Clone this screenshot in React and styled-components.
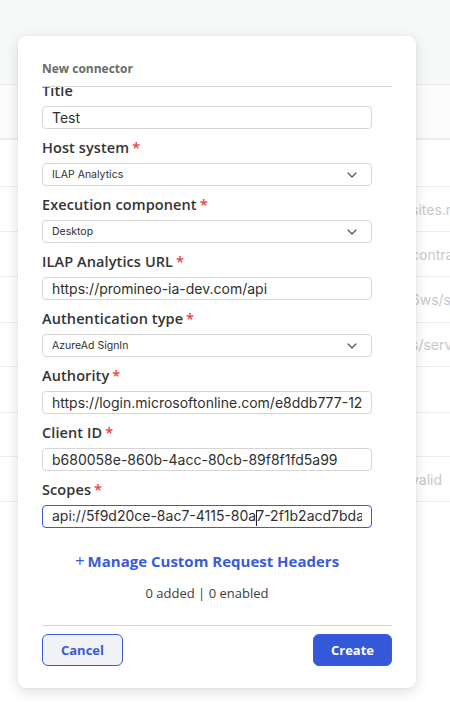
import React from "react";
import styled, { createGlobalStyle } from "styled-components";

const Global = createGlobalStyle`
  html, body { margin: 0; padding: 0; }
  body {
    width: 450px; height: 717px; overflow: hidden;
    background: #ffffff;
    font-family: Inter, "Noto Sans", sans-serif;
  }
`;

const Page = styled.div`
  position: relative;
  width: 450px;
  height: 717px;
  overflow: hidden;
  background: #fff;
`;

const TopBar = styled.div`
  height: 85px;
  background: #f7f8f8;
  border-bottom: 1px solid #eceeee;
  box-sizing: border-box;
`;

const HeadRow = styled.div`
  height: 55px;
  background: #fbfbfb;
  border-bottom: 2px solid #eeeeee;
  box-sizing: border-box;
`;

const Row = styled.div`
  height: ${(p) => p.$h || 45}px;
  border-bottom: 1px solid #eeeeee;
  box-sizing: border-box;
  display: flex;
  align-items: center;
  padding-left: 411px;
  font-size: 14px;
  color: #c8c8c8;
  white-space: nowrap;
  overflow: hidden;
`;

const Overlay = styled.div`
  position: absolute;
  inset: 0;
  display: flex;
  align-items: flex-start;
  padding: 36px 0 0 18px;
`;

const Modal = styled.div`
  width: 398px;
  box-sizing: border-box;
  background: #fff;
  border-radius: 8px;
  box-shadow: 0 4px 14px rgba(0, 0, 0, 0.13), 0 0 2px rgba(0, 0, 0, 0.08);
  padding: 24px 24px 22px;
  display: flex;
  flex-direction: column;
`;

const Title = styled.div`
  font-family: "Open Sans", sans-serif;
  font-weight: 700;
  font-size: 12px;
  line-height: 18px;
  color: #6b6b6b;
  padding-bottom: 8px;
  border-bottom: 1px solid #d4d4d4;
`;

const Scroll = styled.div`
  overflow: hidden;
`;

const Form = styled.div`
  margin-top: -6px;
  width: 330px;
  display: flex;
  flex-direction: column;
`;

const Field = styled.div`
  display: flex;
  flex-direction: column;
  margin-bottom: 9px;
`;

const Label = styled.label`
  font-family: "Open Sans", sans-serif;
  font-weight: 600;
  font-size: 14.5px;
  line-height: 20px;
  color: #343434;
  margin-bottom: 5px;
  letter-spacing: 0.1px;
`;

const Req = styled.span`
  color: #ef3b3b;
  margin-left: 3px;
`;

const Box = styled.div`
  height: 23px;
  box-sizing: border-box;
  border: 1px solid ${(p) => (p.$focus ? "#3a5bd9" : "#d6d6d6")};
  border-radius: 4px;
  display: flex;
  align-items: center;
  padding: 0 9px 0 9px;
  overflow: hidden;
  white-space: nowrap;
  font-size: ${(p) => (p.$small ? "10.5px" : "14px")};
  color: #2f2f2f;
  background: #fff;
`;

const Text = styled.span`
  flex: 1;
  overflow: hidden;
  white-space: nowrap;
`;

const Caret = styled.span`
  display: inline-block;
  width: 1px;
  height: 16px;
  background: #222;
  vertical-align: middle;
  margin: 0 -1px 0 0;
`;

const Chevron = () => (
  <svg width="10" height="6" viewBox="0 0 10 6" style={{ marginRight: 5 }}>
    <path d="M1 1l4 4 4-4" fill="none" stroke="#555" strokeWidth="1.2" strokeLinecap="round" strokeLinejoin="round" />
  </svg>
);

const Manage = styled.div`
  margin-top: 14px;
  text-align: center;
  font-family: "Open Sans", sans-serif;
  font-weight: 700;
  font-size: 15px;
  line-height: 20px;
  color: #3a5bd9;
`;

const Plus = styled.span`
  font-weight: 400;
  font-size: 17px;
  margin-right: 3px;
`;

const Count = styled.div`
  margin-top: 14px;
  text-align: center;
  font-family: "Open Sans", sans-serif;
  font-size: 13px;
  line-height: 16px;
  color: #3d3d3d;
`;

const Footer = styled.div`
  margin-top: 24px;
  border-top: 1px solid #d4d4d4;
  padding-top: 8px;
  display: flex;
  justify-content: space-between;
  align-items: center;
`;

const Btn = styled.button`
  height: 32px;
  box-sizing: border-box;
  border-radius: 6px;
  font-family: "Open Sans", sans-serif;
  font-weight: 700;
  font-size: 13px;
  cursor: pointer;
  border: 1px solid #3a5bd9;
  padding: 0;
  width: ${(p) => (p.$primary ? "79px" : "81px")};
  background: ${(p) => (p.$primary ? "#3358d8" : "#f0f2f6")};
  color: ${(p) => (p.$primary ? "#fff" : "#3a5bd9")};
`;

const fields = [
  { label: "Host system", value: "ILAP Analytics", select: true },
  { label: "Execution component", value: "Desktop", select: true },
  { label: "ILAP Analytics URL", value: "https://promineo-ia-dev.com/api" },
  { label: "Authentication type", value: "AzureAd SignIn", select: true },
  { label: "Authority", value: "https://login.microsoftonline.com/e8ddb777-1234-5678" },
  { label: "Client ID", value: "b680058e-860b-4acc-80cb-89f8f1fd5a99" },
];

export default function App() {
  return (
    <>
      <Global />
      <Page>
        <TopBar />
        <HeadRow />
        <Row $h={47} />
        <Row>sites.net</Row>
        <Row>contract</Row>
        <Row $h={46}>6ws/svc</Row>
        <Row $h={44}>s/services</Row>
        <Row $h={46} />
        <Row $h={44} />
        <Row>valid</Row>
        <Overlay>
          <Modal>
            <Title>New connector</Title>
            <Scroll>
              <Form>
                <Field>
                  <Label>Title</Label>
                  <Box><Text>Test</Text></Box>
                </Field>
                {fields.map((f) => (
                  <Field key={f.label}>
                    <Label>
                      {f.label}
                      <Req>*</Req>
                    </Label>
                    <Box $small={f.select}>
                      <Text>{f.value}</Text>
                      {f.select && <Chevron />}
                    </Box>
                  </Field>
                ))}
                <Field>
                  <Label>
                    Scopes<Req>*</Req>
                  </Label>
                  <Box $focus>
                    <Text>
                      api://5f9d20ce-8ac7-4115-80a<Caret />7-2f1b2acd7bda
                    </Text>
                  </Box>
                </Field>
                <Manage>
                  <Plus>+</Plus>Manage Custom Request Headers
                </Manage>
                <Count>0 added | 0 enabled</Count>
              </Form>
            </Scroll>
            <Footer>
              <Btn>Cancel</Btn>
              <Btn $primary>Create</Btn>
            </Footer>
          </Modal>
        </Overlay>
      </Page>
    </>
  );
}
